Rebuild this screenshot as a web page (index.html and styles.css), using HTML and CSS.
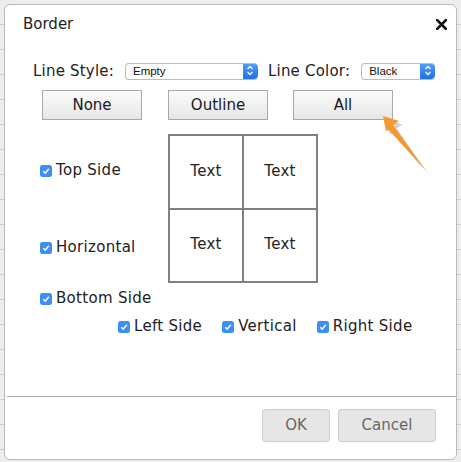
FILE: index.html
```html
<!DOCTYPE html>
<html>
<head>
<meta charset="utf-8">
<link rel="stylesheet" href="styles.css">
</head>
<body>
<div class="dialog">
  <div class="header">
    <span class="title">Border</span>
    <svg class="close" width="11" height="11" viewBox="0 0 11 11"><path d="M1 1L10 10M10 1L1 10" stroke="#111" stroke-width="2.6" stroke-linecap="square"/></svg>
  </div>

  <div class="style-row">
    <span class="label">Line Style:</span>
    <div class="select sel-style"><span class="sel-text">Empty</span><span class="cap"><svg width="8" height="11" viewBox="0 0 8 11"><path d="M1.5 4L4 1.5L6.5 4M1.5 7L4 9.5L6.5 7" fill="none" stroke="#fff" stroke-width="1.3"/></svg></span></div>
    <span class="label">Line Color:</span>
    <div class="select sel-color"><span class="sel-text">Black</span><span class="cap"><svg width="8" height="11" viewBox="0 0 8 11"><path d="M1.5 4L4 1.5L6.5 4M1.5 7L4 9.5L6.5 7" fill="none" stroke="#fff" stroke-width="1.3"/></svg></span></div>
  </div>

  <div class="btn-row">
    <div class="btn">None</div>
    <div class="btn">Outline</div>
    <div class="btn">All</div>
  </div>

  <div class="main">
    <div class="left-col">
      <label class="check chk-top"><svg class="box" width="12" height="12" viewBox="0 0 12 12"><rect x="0" y="0" width="12" height="12" rx="2.5" fill="#3d8ff4"/><path d="M3.3 6.3L5.2 8.2L8.8 3.8" fill="none" stroke="#fff" stroke-width="1.5"/></svg>Top Side</label>
      <label class="check chk-hor"><svg class="box" width="12" height="12" viewBox="0 0 12 12"><rect x="0" y="0" width="12" height="12" rx="2.5" fill="#3d8ff4"/><path d="M3.3 6.3L5.2 8.2L8.8 3.8" fill="none" stroke="#fff" stroke-width="1.5"/></svg>Horizontal</label>
    </div>
    <div class="preview">
      <div class="cell">Text</div>
      <div class="cell">Text</div>
      <div class="cell">Text</div>
      <div class="cell">Text</div>
    </div>
  </div>

  <div class="bottom-side">
    <label class="check"><svg class="box" width="12" height="12" viewBox="0 0 12 12"><rect x="0" y="0" width="12" height="12" rx="2.5" fill="#3d8ff4"/><path d="M3.3 6.3L5.2 8.2L8.8 3.8" fill="none" stroke="#fff" stroke-width="1.5"/></svg>Bottom Side</label>
  </div>

  <div class="sides-row">
    <label class="check"><svg class="box" width="12" height="12" viewBox="0 0 12 12"><rect x="0" y="0" width="12" height="12" rx="2.5" fill="#3d8ff4"/><path d="M3.3 6.3L5.2 8.2L8.8 3.8" fill="none" stroke="#fff" stroke-width="1.5"/></svg>Left Side</label>
    <label class="check"><svg class="box" width="12" height="12" viewBox="0 0 12 12"><rect x="0" y="0" width="12" height="12" rx="2.5" fill="#3d8ff4"/><path d="M3.3 6.3L5.2 8.2L8.8 3.8" fill="none" stroke="#fff" stroke-width="1.5"/></svg>Vertical</label>
    <label class="check"><svg class="box" width="12" height="12" viewBox="0 0 12 12"><rect x="0" y="0" width="12" height="12" rx="2.5" fill="#3d8ff4"/><path d="M3.3 6.3L5.2 8.2L8.8 3.8" fill="none" stroke="#fff" stroke-width="1.5"/></svg>Right Side</label>
  </div>

  <div class="separator"></div>

  <div class="footer">
    <div class="fbtn ok">OK</div>
    <div class="fbtn cancel">Cancel</div>
  </div>
</div>

<svg class="arrow" width="70" height="80" viewBox="0 0 70 80">
  <polygon points="15,18 31,23 25,27 57,72 21,32 18,33" fill="#9a9a9a" opacity="0.45" transform="translate(1.5,1.5)"/>
  <polygon points="13,16 29,21 23,25 55,70 19,30 16,31" fill="#f7972e"/>
</svg>
</body>
</html>
```

FILE: styles.css
```css
html, body {
  margin: 0;
  padding: 0;
}
body {
  width: 461px;
  height: 462px;
  overflow: hidden;
  background-color: #ededed;
  background-image: repeating-linear-gradient(to bottom, transparent 0, transparent 24px, #c9cfdc 24px, #c9cfdc 25px);
  font-family: "DejaVu Sans", Verdana, sans-serif;
  color: #222;
  position: relative;
}
.dialog {
  position: relative;
  margin: 4px 0 0 4px;
  width: 453px;
  height: 456px;
  box-sizing: border-box;
  border: 1px solid #b9b9b9;
  border-radius: 6px;
  background: #fff;
}
.header {
  display: flex;
  justify-content: space-between;
  align-items: center;
  height: 18px;
  padding: 10px 9px 0 18px;
}
.title {
  font-size: 15px;
  line-height: 18px;
  color: #222;
}
.close {
  display: block;
  margin-top: 1px;
}
.style-row {
  display: flex;
  align-items: center;
  height: 18px;
  margin-top: 29px;
  padding-left: 28px;
}
.label {
  font-size: 15px;
  line-height: 18px;
  color: #222;
  letter-spacing: 0.2px;
}
.select {
  display: flex;
  align-items: center;
  justify-content: space-between;
  box-sizing: border-box;
  height: 17px;
  border: 1px solid #bcbcbc;
  border-right: none;
  border-radius: 4px;
  background: #fff;
  overflow: hidden;
}
.sel-style {
  width: 133px;
  margin-left: 11px;
  margin-right: 10px;
}
.sel-color {
  width: 74px;
  margin-left: 11px;
}
.sel-text {
  font-family: "Liberation Sans", Arial, sans-serif;
  font-size: 11.5px;
  color: #111;
  padding-left: 7px;
}
.cap {
  display: flex;
  align-items: center;
  justify-content: center;
  width: 15px;
  height: 17px;
  margin-top: -1px;
  background: linear-gradient(to bottom, #56a2fa, #1d71ea);
  border-radius: 0 4px 4px 0;
}
.btn-row {
  display: flex;
  gap: 26px;
  margin-top: 10px;
  padding-left: 37px;
}
.btn {
  box-sizing: border-box;
  width: 100px;
  height: 30px;
  border: 1px solid #a9a9a9;
  background: linear-gradient(to bottom, #fbfbfb, #e6e6e6);
  font-size: 15px;
  line-height: 28px;
  text-align: center;
  color: #1a1a1a;
}
.btn:nth-child(3) {
  margin-left: -1px;
}
.main {
  display: flex;
  margin-top: 14px;
  padding-left: 35px;
}
.left-col {
  width: 128px;
  position: relative;
}
.check {
  display: flex;
  align-items: center;
  gap: 4px;
  font-size: 15px;
  line-height: 20px;
  height: 20px;
  color: #222;
  white-space: nowrap;
  letter-spacing: 0.3px;
}
.box {
  display: block;
  flex: none;
  margin-top: 1px;
}
.chk-top {
  margin-top: 26px;
}
.chk-hor {
  margin-top: 57px;
}
.preview {
  display: grid;
  grid-template-columns: 72px 72px;
  grid-template-rows: 72px 71px;
  gap: 2px;
  padding: 2px;
  background: #808080;
}
.cell {
  background: #fff;
  display: flex;
  align-items: center;
  justify-content: center;
  font-size: 15px;
  color: #222;
  padding-bottom: 3px;
  box-sizing: border-box;
  letter-spacing: 0.3px;
}
.bottom-side {
  margin-top: 5px;
  padding-left: 35px;
}
.sides-row {
  display: flex;
  gap: 20px;
  margin-top: 8px;
  padding-left: 113px;
}
.separator {
  height: 1px;
  background: #aaaaaa;
  margin: 60px 0 0 2px;
}
.footer {
  display: flex;
  justify-content: flex-end;
  gap: 8px;
  margin-top: 12px;
  padding-right: 20px;
}
.fbtn {
  box-sizing: border-box;
  height: 33px;
  border: 1px solid #cdcdcd;
  border-radius: 3px;
  background: #e6e6e6;
  font-size: 15px;
  line-height: 31px;
  text-align: center;
  color: #666;
}
.ok {
  width: 68px;
}
.cancel {
  width: 98px;
}
.arrow {
  position: absolute;
  left: 370px;
  top: 100px;
}
```
